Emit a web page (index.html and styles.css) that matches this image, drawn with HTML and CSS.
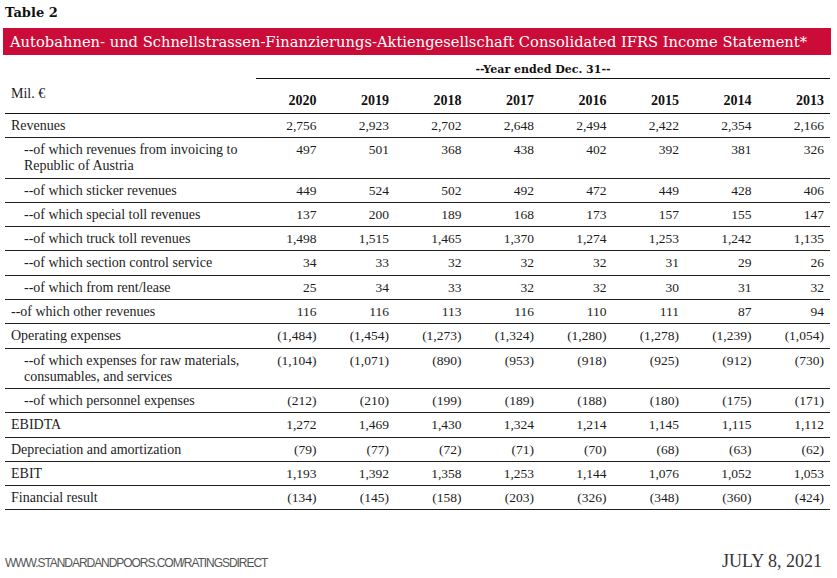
FILE: index.html
```html
<!DOCTYPE html>
<html lang="en">
<head>
  <meta charset="UTF-8" />
  <meta name="viewport" content="width=device-width, initial-scale=1.0"/>
  <title>Table 2 - Income Statement</title>
  <link rel="stylesheet" href="styles.css">
</head>
<body>

  <div class="page">
    <div class="table-no">Table 2</div>
    <div class="banner">Autobahnen- und Schnellstrassen-Finanzierungs-Aktiengesellschaft Consolidated IFRS Income Statement*</div>

    <!-- ======= TABLE ======= -->
    <table class="fin">
      <thead>
        <tr class="span-row">
          <th></th>
          <th colspan="8"><div class="span-label">--Year ended Dec. 31--</div></th>
        </tr>
        <tr class="year-row">
          <th class="unit">Mil. &euro;</th>
          <th>2020</th><th>2019</th><th>2018</th><th>2017</th><th>2016</th><th>2015</th><th>2014</th><th>2013</th>
        </tr>
      </thead>
      <tbody>
        <tr>
          <td>Revenues</td>
          <td>2,756</td><td>2,923</td><td>2,702</td><td>2,648</td><td>2,494</td><td>2,422</td><td>2,354</td><td>2,166</td>
        </tr>
        <tr class="sub">
          <td>--of which revenues from invoicing to Republic of Austria</td>
          <td>497</td><td>501</td><td>368</td><td>438</td><td>402</td><td>392</td><td>381</td><td>326</td>
        </tr>
        <tr class="sub">
          <td>--of which sticker revenues</td>
          <td>449</td><td>524</td><td>502</td><td>492</td><td>472</td><td>449</td><td>428</td><td>406</td>
        </tr>
        <tr class="sub">
          <td>--of which special toll revenues</td>
          <td>137</td><td>200</td><td>189</td><td>168</td><td>173</td><td>157</td><td>155</td><td>147</td>
        </tr>
        <tr class="sub">
          <td>--of which truck toll revenues</td>
          <td>1,498</td><td>1,515</td><td>1,465</td><td>1,370</td><td>1,274</td><td>1,253</td><td>1,242</td><td>1,135</td>
        </tr>
        <tr class="sub">
          <td>--of which section control service</td>
          <td>34</td><td>33</td><td>32</td><td>32</td><td>32</td><td>31</td><td>29</td><td>26</td>
        </tr>
        <tr class="sub">
          <td>--of which from rent/lease</td>
          <td>25</td><td>34</td><td>33</td><td>32</td><td>32</td><td>30</td><td>31</td><td>32</td>
        </tr>
        <tr>
          <td>--of which other revenues</td>
          <td>116</td><td>116</td><td>113</td><td>116</td><td>110</td><td>111</td><td>87</td><td>94</td>
        </tr>
        <tr>
          <td>Operating expenses</td>
          <td>(1,484)</td><td>(1,454)</td><td>(1,273)</td><td>(1,324)</td><td>(1,280)</td><td>(1,278)</td><td>(1,239)</td><td>(1,054)</td>
        </tr>
        <tr class="sub">
          <td>--of which expenses for raw materials, consumables, and services</td>
          <td>(1,104)</td><td>(1,071)</td><td>(890)</td><td>(953)</td><td>(918)</td><td>(925)</td><td>(912)</td><td>(730)</td>
        </tr>
        <tr class="sub">
          <td>--of which personnel expenses</td>
          <td>(212)</td><td>(210)</td><td>(199)</td><td>(189)</td><td>(188)</td><td>(180)</td><td>(175)</td><td>(171)</td>
        </tr>
        <tr>
          <td>EBIDTA</td>
          <td>1,272</td><td>1,469</td><td>1,430</td><td>1,324</td><td>1,214</td><td>1,145</td><td>1,115</td><td>1,112</td>
        </tr>
        <tr>
          <td>Depreciation and amortization</td>
          <td>(79)</td><td>(77)</td><td>(72)</td><td>(71)</td><td>(70)</td><td>(68)</td><td>(63)</td><td>(62)</td>
        </tr>
        <tr>
          <td>EBIT</td>
          <td>1,193</td><td>1,392</td><td>1,358</td><td>1,253</td><td>1,144</td><td>1,076</td><td>1,052</td><td>1,053</td>
        </tr>
        <tr>
          <td>Financial result</td>
          <td>(134)</td><td>(145)</td><td>(158)</td><td>(203)</td><td>(326)</td><td>(348)</td><td>(360)</td><td>(424)</td>
        </tr>
      </tbody>
    </table>

    <!-- ======= FOOTER ======= -->
    <footer class="page-foot">
      <span class="url">WWW.STANDARDANDPOORS.COM/RATINGSDIRECT</span>
      <span class="date">JULY 8, 2021</span>
    </footer>
  </div>

</body>
</html>
```

FILE: styles.css
```css
body {
  margin: 0;
  padding: 0;
  background: #fff;
  color: #1c1c1c;
  font-family: 'Liberation Serif', serif;
}

.page {
  width: 837px;
  height: 578px;
  padding: 0 3px;
  box-sizing: border-box;
}

/* ===== TITLE ===== */
.table-no {
  font-family: 'DejaVu Serif', serif;
  font-weight: bold;
  font-size: 13px;
  line-height: 16px;
  padding: 5px 0 0 2px;
  height: 23px;
  color: #111;
}

.banner {
  background: #cc0c38;
  color: #fff;
  font-family: 'DejaVu Serif', serif;
  font-size: 14.7px;
  line-height: 27px;
  height: 27px;
  padding-left: 7px;
  margin-right: 3px;
  white-space: nowrap;
  overflow: hidden;
}

/* ===== TABLE ===== */
.fin {
  border-collapse: collapse;
  table-layout: fixed;
  width: 825px;
  margin-left: 2px;
  font-size: 13.5px;
  line-height: 16px;
}

.fin th:first-child,
.fin td:first-child {
  width: 239px;
  text-align: left;
  padding-left: 6px;
  font-size: 14px;
}

.fin th,
.fin td {
  padding: 4px 6px 3.3px 0;
  text-align: right;
  vertical-align: top;
}

.fin tbody td {
  border-bottom: 1px solid #1f1f1f;
}

.fin tbody tr.sub td:first-child {
  padding-left: 19px;
  width: 226px;
}

.span-row th {
  padding: 0;
  height: 23px;
}

.span-label {
  margin-left: 6px;
  border-bottom: 1px solid #111;
  text-align: center;
  font-family: 'DejaVu Serif', serif;
  font-weight: bold;
  font-size: 11px;
  line-height: 14px;
  padding: 8px 0 1px;
  color: #111;
}

.year-row th {
  height: 23px;
  vertical-align: bottom;
  padding-bottom: 4px;
  font-size: 14px;
  font-weight: bold;
  border-bottom: 1px solid #111;
  color: #111;
}

.year-row th.unit {
  vertical-align: top;
  font-weight: normal;
  font-size: 14px;
  padding-top: 7px;
  color: #1c1c1c;
}

/* ===== FOOTER ===== */
.page-foot {
  display: flex;
  justify-content: space-between;
  align-items: baseline;
  margin-top: 41px;
  padding-left: 2px;
  padding-right: 12px;
}

.url {
  font-family: 'Liberation Sans Narrow', 'Liberation Sans', sans-serif;
  font-size: 12px;
  color: #555;
  letter-spacing: -1.05px;
}

.date {
  font-family: 'Liberation Serif', serif;
  font-size: 18px;
  color: #333;
}
```
